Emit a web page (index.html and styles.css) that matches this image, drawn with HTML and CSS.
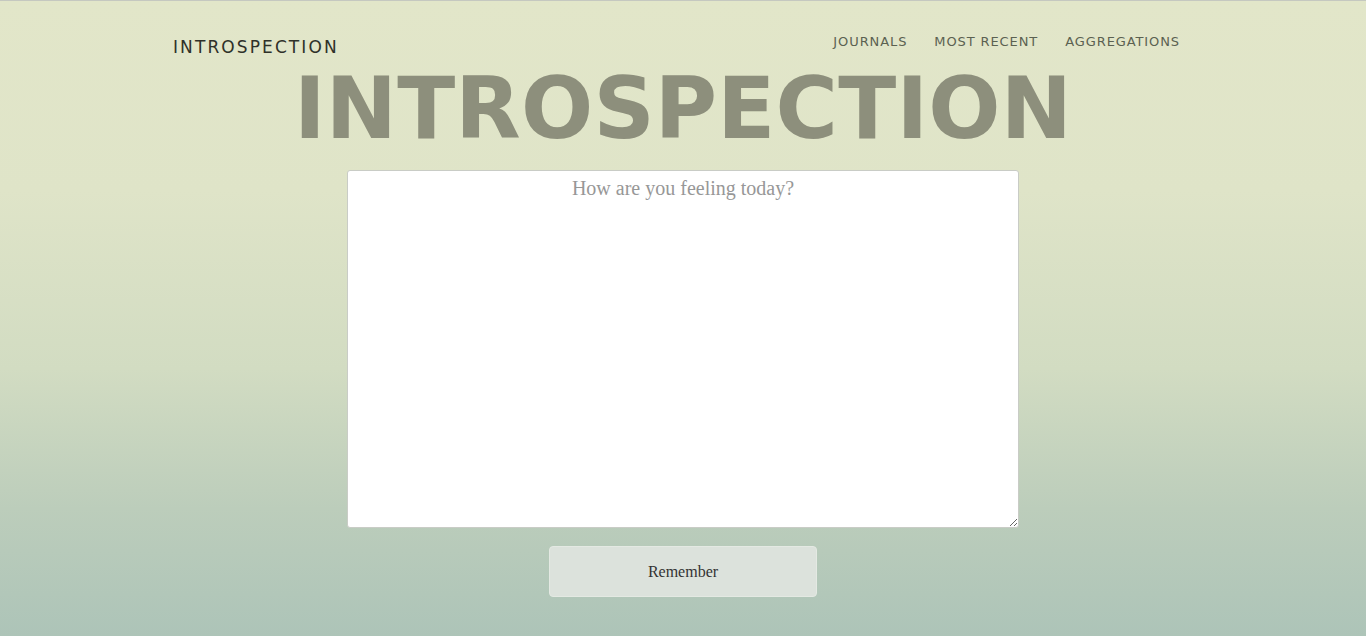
FILE: index.html
```html
<!DOCTYPE html>
<html lang="en">
<head>
<meta charset="utf-8">
<title>Introspection</title>
<link rel="stylesheet" href="styles.css">
</head>
<body>
<div class="page">
  <header class="topbar">
    <a class="brand" href="#">INTROSPECTION</a>
    <nav class="nav">
      <a href="#">JOURNALS</a>
      <a href="#">MOST RECENT</a>
      <a href="#">AGGREGATIONS</a>
    </nav>
  </header>
  <main class="main">
    <h1 class="hero">INTROSPECTION</h1>
    <form class="entry">
      <textarea class="entry-text" placeholder="How are you feeling today?"></textarea>
      <button type="button" class="entry-btn">Remember</button>
    </form>
  </main>
</div>
</body>
</html>
```

FILE: styles.css
```css
html, body {
  margin: 0;
  padding: 0;
  height: 100%;
}
body {
  border-top: 1px solid #c5c8c0;
  box-sizing: border-box;
  background: linear-gradient(to bottom, #e2e6c9 0%, #dfe4c8 30%, #d2dcc2 58%, #bccdbb 80%, #adc4b8 100%);
  font-family: "DejaVu Sans", sans-serif;
  overflow: hidden;
}
.page {
  height: 100%;
  display: flex;
  flex-direction: column;
}
.topbar {
  display: flex;
  justify-content: space-between;
  align-items: flex-start;
  padding: 0 186px 0 173px;
}
.brand {
  margin-top: 36px;
  font-size: 17px;
  letter-spacing: 2.1px;
  color: #2f3129;
  text-decoration: none;
  font-weight: 500;
}
.nav {
  display: flex;
  gap: 27px;
  margin-top: 33px;
}
.nav a {
  font-size: 13px;
  letter-spacing: 0.9px;
  color: #5b6151;
  text-decoration: none;
}
.main {
  display: flex;
  flex-direction: column;
  align-items: center;
}
.hero {
  margin: 4px 0 0;
  font-size: 85px;
  line-height: 96px;
  font-weight: 700;
  color: #8d8f7c;
  letter-spacing: 0.2px;
}
.entry {
  display: flex;
  flex-direction: column;
  align-items: center;
  gap: 18px;
  margin-top: 13px;
}
.entry-text {
  width: 672px;
  height: 358px;
  box-sizing: border-box;
  border: 1px solid #c9ccc6;
  border-radius: 3px;
  background: #fff;
  padding: 6px 12px;
  font-family: "Liberation Serif", serif;
  font-size: 20px;
  text-align: center;
  color: #555;
  outline: none;
}
.entry-text::placeholder {
  color: #979797;
}
.entry-btn {
  width: 268px;
  height: 51px;
  background: #dce2dc;
  border: 1px solid #e4e9e3;
  border-radius: 4px;
  font-family: "Liberation Serif", serif;
  font-size: 16px;
  color: #333;
  cursor: pointer;
}
```
